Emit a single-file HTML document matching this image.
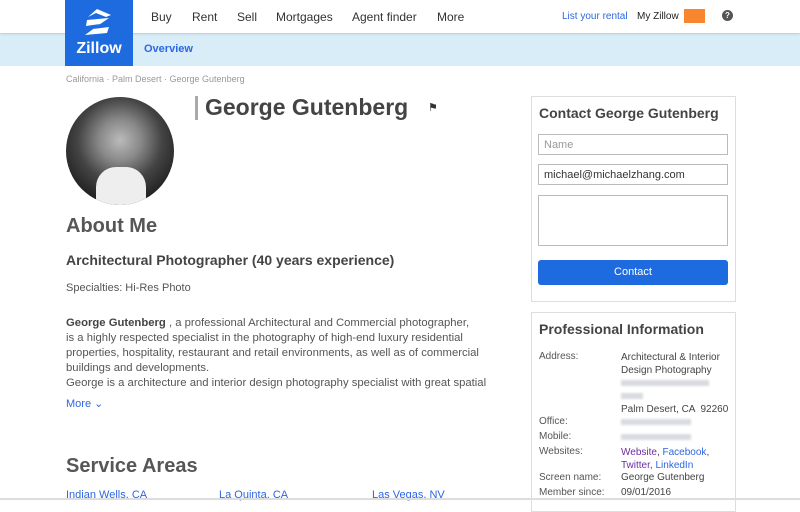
<!DOCTYPE html>
<html><head><meta charset="utf-8"><style>
*{margin:0;padding:0;box-sizing:border-box}
body{width:800px;height:500px;overflow:hidden;background:#fff;font-family:"Liberation Sans",sans-serif;color:#444;position:relative}
.a{position:absolute;white-space:nowrap}
.nav{font-size:12px;color:#333;top:10px}
.blue{color:#2d66e0}
.lbl{font-size:10px;color:#555}
.val{font-size:10px;color:#444}
.blur{background:#d9dbe0;height:6px;filter:blur(1px)}
</style></head><body>
<div class="a" style="left:0;top:0;width:800px;height:33px;background:#fff;box-shadow:0 1px 2px rgba(0,0,0,.15);z-index:1"></div>
<div class="a" style="left:0;top:33px;width:800px;height:33px;background:#d9edf8"></div>
<div class="a" style="left:65px;top:0;width:68px;height:66px;background:#1e6be0;z-index:2">
<svg width="68" height="66" viewBox="0 0 68 66"><path d="M32 9 L46 15 L41 17 L31 13 L23 17 Z M22 20 L44 18 L28 29 L44 27 L42 33 L20 35 L35 24 L21 26 Z" fill="#fff"/></svg>
<div class="a" style="left:0;width:68px;text-align:center;top:40px;color:#fff;font-weight:bold;font-size:16px">Zillow</div></div>
<div class="a nav" style="left:151px;z-index:2">Buy</div>
<div class="a nav" style="left:192px;z-index:2">Rent</div>
<div class="a nav" style="left:237px;z-index:2">Sell</div>
<div class="a nav" style="left:276px;z-index:2">Mortgages</div>
<div class="a nav" style="left:352px;z-index:2">Agent finder</div>
<div class="a nav" style="left:437px;z-index:2">More</div>
<div class="a blue" style="left:562px;top:11px;font-size:10px;z-index:2">List your rental</div>
<div class="a" style="left:637px;top:11px;font-size:10px;color:#222;z-index:2">My Zillow</div>
<div class="a" style="left:684px;top:9px;width:21px;height:14px;background:#f7862e;z-index:2"></div>
<div class="a" style="left:722px;top:10px;width:11px;height:11px;border-radius:50%;background:#555;color:#fff;font-size:8px;font-weight:bold;text-align:center;line-height:11px;z-index:2">?</div>
<div class="a blue" style="left:144px;top:43px;font-size:11px;font-weight:bold">Overview</div>
<div class="a" style="left:66px;top:74px;font-size:9px;color:#999">California · Palm Desert · George Gutenberg</div>
<div class="a" style="left:66px;top:97px;width:108px;height:108px;border-radius:50%;background:radial-gradient(circle at 50% 40%,#bbb 0,#888 25%,#444 50%,#222 75%);overflow:hidden">
<div class="a" style="left:30px;top:70px;width:50px;height:40px;background:#eee;border-radius:20px 20px 0 0"></div></div>
<div class="a" style="left:195px;top:96px;width:3px;height:24px;background:#aaa"></div>
<div class="a" style="left:205px;top:94px;font-size:23px;font-weight:bold;color:#444">George Gutenberg</div>
<div class="a" style="left:428px;top:101px;font-size:11px;color:#333">⚑</div>
<div class="a" style="left:66px;top:215px;font-size:20px;color:#444;font-weight:bold;opacity:.9">About Me</div>
<div class="a" style="left:66px;top:252px;font-size:14px;font-weight:bold;color:#444">Architectural Photographer (40 years experience)</div>
<div class="a" style="left:66px;top:282px;font-size:11px;color:#555">Specialties: Hi-Res Photo</div>
<div class="a" style="left:66px;top:316px;font-size:11.3px;line-height:15px;color:#555"><b style="color:#444">George Gutenberg</b> , a professional Architectural and Commercial photographer,<br>is a highly respected specialist in the photography of high-end luxury residential<br>properties, hospitality, restaurant and retail environments, as well as of commercial<br>buildings and developments.<br>George is a architecture and interior design photography specialist with great spatial</div>
<div class="a blue" style="left:66px;top:397px;font-size:11px">More ⌄</div>
<div class="a" style="left:66px;top:455px;font-size:20px;color:#444;font-weight:bold;opacity:.9">Service Areas</div>
<div class="a blue" style="left:66px;top:489px;font-size:11px">Indian Wells, CA</div>
<div class="a blue" style="left:219px;top:489px;font-size:11px">La Quinta, CA</div>
<div class="a blue" style="left:372px;top:489px;font-size:11px">Las Vegas, NV</div>
<div class="a" style="left:531px;top:96px;width:205px;height:206px;border:1px solid #ddd"></div>
<div class="a" style="left:539px;top:105px;font-size:14px;font-weight:bold;color:#444">Contact George Gutenberg</div>
<div class="a" style="left:538px;top:134px;width:190px;height:21px;border:1px solid #bbb;font-size:11px;color:#999;padding:4px 5px">Name</div>
<div class="a" style="left:538px;top:164px;width:190px;height:21px;border:1px solid #bbb;font-size:11px;color:#333;padding:4px 5px">michael@michaelzhang.com</div>
<div class="a" style="left:538px;top:195px;width:190px;height:51px;border:1px solid #bbb"></div>
<div class="a" style="left:538px;top:260px;width:190px;height:25px;background:#1e6be0;border-radius:3px;color:#fff;font-size:11px;text-align:center;line-height:25px">Contact</div>
<div class="a" style="left:531px;top:312px;width:205px;height:200px;border:1px solid #ddd"></div>
<div class="a" style="left:539px;top:321px;font-size:14px;font-weight:bold;color:#444">Professional Information</div>
<div class="a lbl" style="left:539px;top:351px">Address:</div>
<div class="a val" style="left:621px;top:351px;line-height:13px">Architectural &amp; Interior<br>Design Photography</div>
<div class="a blur" style="left:621px;top:380px;width:88px"></div>
<div class="a blur" style="left:621px;top:393px;width:22px"></div>
<div class="a val" style="left:621px;top:404px">Palm Desert, CA &nbsp;92260</div>
<div class="a lbl" style="left:539px;top:416px">Office:</div><div class="a blur" style="left:621px;top:419px;width:70px"></div>
<div class="a lbl" style="left:539px;top:431px">Mobile:</div><div class="a blur" style="left:621px;top:434px;width:70px"></div>
<div class="a lbl" style="left:539px;top:446px">Websites:</div>
<div class="a val" style="left:621px;top:446px;line-height:13px"><span style="color:#6a2ea0">Website</span>, <span class="blue">Facebook</span>,<br><span style="color:#6a2ea0">Twitter</span>, <span class="blue">LinkedIn</span></div>
<div class="a lbl" style="left:539px;top:472px">Screen name:</div><div class="a val" style="left:621px;top:472px">George Gutenberg</div>
<div class="a lbl" style="left:539px;top:487px">Member since:</div><div class="a val" style="left:621px;top:487px">09/01/2016</div>
<div class="a" style="left:0;top:498px;width:800px;height:2px;background:#ddd"></div>
</body></html>
